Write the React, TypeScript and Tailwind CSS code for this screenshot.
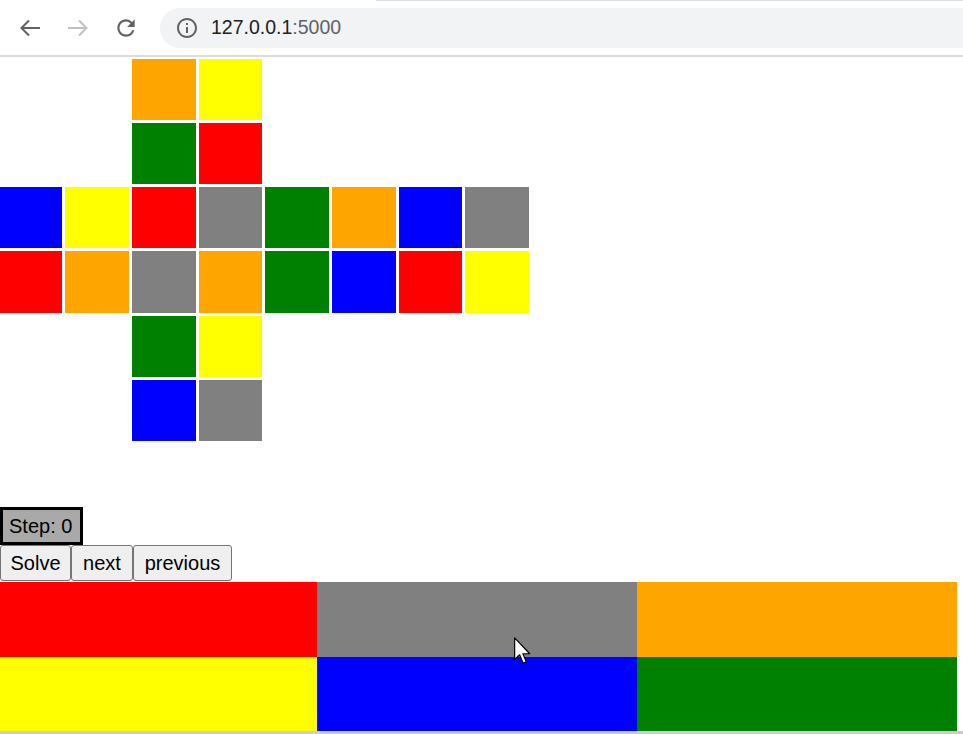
const R = "bg-[#ff0000]";
const G = "bg-[#008000]";
const B = "bg-[#0000ff]";
const Y = "bg-[#ffff00]";
const O = "bg-[#ffa500]";
const S = "bg-[#808080]";

// null = empty slot in the cube net
const net: (string | null)[][] = [
  [null, null, O, Y, null, null, null, null],
  [null, null, G, R, null, null, null, null],
  [B, Y, R, S, G, O, B, S],
  [R, O, S, O, G, B, R, Y],
  [null, null, G, Y, null, null, null, null],
  [null, null, B, S, null, null, null, null],
];

const bars = [
  [R, S, O],
  [Y, B, G],
];

const BrowserBar = () => {
  return (
    <div className="relative h-[57px] bg-white border-b-2 border-[#dadce0] flex items-center">
      <div className="absolute top-0 left-[376px] right-0 h-px bg-[#dee1e6]" />
      <div className="w-[60px] flex justify-center">
        <svg width="22" height="18" viewBox="0 0 22 18" fill="none" stroke="#5f6368" strokeWidth="2">
          <path d="M21 9H3M10 1.5L2.5 9L10 16.5" />
        </svg>
      </div>
      <div className="w-[36px] flex justify-center">
        <svg width="22" height="18" viewBox="0 0 22 18" fill="none" stroke="#bdc1c6" strokeWidth="2">
          <path d="M1 9H19M12 1.5L19.5 9L12 16.5" />
        </svg>
      </div>
      <div className="w-[60px] flex justify-center">
        <svg width="26" height="26" viewBox="0 0 24 24" fill="#5f6368">
          <path d="M17.65 6.35A7.958 7.958 0 0 0 12 4c-4.42 0-7.990 3.58-7.99 8s3.57 8 7.99 8c3.73 0 6.84-2.55 7.73-6h-2.08A5.99 5.99 0 0 1 12 18c-3.31 0-6-2.690-6-6s2.69-6 6-6c1.66 0 3.14.69 4.22 1.78L13 11h7V4l-2.35 2.35z" />
        </svg>
      </div>
      <div className="ml-[4px] flex-1 h-[40px] rounded-l-full bg-[#f1f3f4] flex items-center pl-[15px]">
        <svg width="24" height="24" viewBox="0 0 24 24" fill="#5f6368">
          <path d="M11 7h2v2h-2zm0 4h2v6h-2zm1-9C6.48 2 2 6.48 2 12s4.48 10 10 10 10-4.48 10-10S17.52 2 12 2zm0 18c-4.41 0-8-3.59-8-8s3.59-8 8-8 8 3.59 8 8-3.59 8-8 8z" />
        </svg>
        <span className="ml-[12px] text-[19.5px] text-[#202124] font-['Liberation_Sans',sans-serif]">
          127.0.0.1<span className="text-[#5f6368]">:5000</span>
        </span>
      </div>
    </div>
  );
};

const App = () => {
  return (
    <div className="relative w-[963px] h-[734px] overflow-hidden bg-white font-['Liberation_Sans',Arial,sans-serif] text-black">
      <BrowserBar />

      <div className="mt-[2px] grid grid-cols-[62px_64px_64px_63px_64px_64px_63px_64px] grid-rows-[61px_61px_61px_62px_61px_61px] gap-[3px]">
        {net.map((row, r) =>
          row.map((color, c) => (
            <div key={r + "-" + c} className={color ? color : ""} />
          ))
        )}
      </div>

      <div className="mt-[66px] w-[83px] h-[38px] border-[3px] border-black bg-[#a9a9a9] flex items-center pl-[6px] text-[20px]">
        Step: 0
      </div>

      <div className="flex h-[37px]">
        <button className="w-[71px] h-[36px] border border-[#767676] rounded-[3px] bg-[#efefef] text-[20px]">Solve</button>
        <button className="w-[62px] h-[36px] border border-[#767676] rounded-[3px] bg-[#efefef] text-[20px]">next</button>
        <button className="w-[99px] h-[36px] border border-[#767676] rounded-[3px] bg-[#efefef] text-[20px]">previous</button>
      </div>

      <div className="w-[957px]">
        {bars.map((row, i) => (
          <div key={i} className={"grid grid-cols-[317px_320px_320px] " + (i === 0 ? "h-[75px]" : "h-[74px]")}>
            {row.map((color, j) => (
              <div key={j} className={color} />
            ))}
          </div>
        ))}
      </div>
      <div className="h-[3px] bg-[#cccccc]" />

      {/* mouse pointer sitting over the bars */}
      <svg className="absolute left-[514px] top-[637px]" width="17" height="28" viewBox="0 0 13 21">
        <path d="M0.5 0.5V17L4.3 13.4L7 19.8L9.4 18.8L6.8 12.6H12Z" fill="white" stroke="black" strokeWidth="0.9" strokeLinejoin="round" />
      </svg>
    </div>
  );
};

export default App;
